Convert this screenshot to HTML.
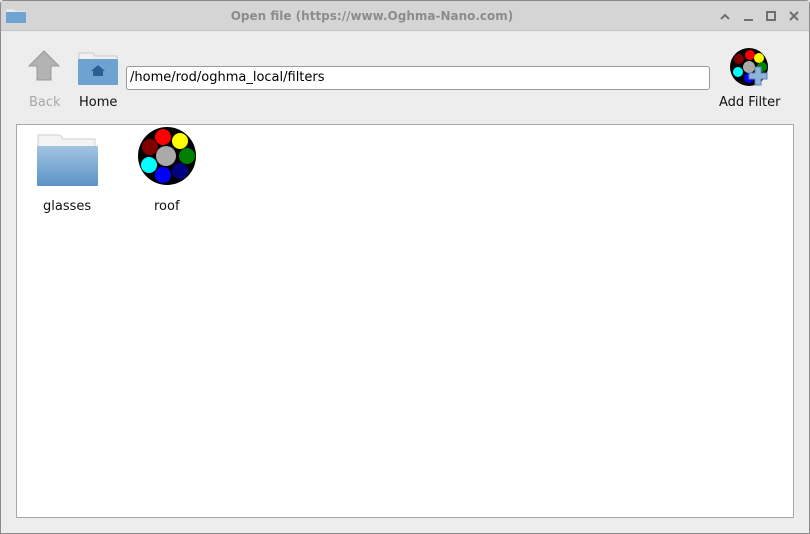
<!DOCTYPE html>
<html><head><style>
body{margin:0;width:810px;height:534px;background:#ededed;font-family:"Liberation Sans","DejaVu Sans",sans-serif;position:relative;overflow:hidden}
.win{position:absolute;left:0;top:0;width:808px;height:532px;border:1px solid #8a8a8a;border-radius:4px 4px 0 0;background:#ededed}
.in{position:absolute;left:-1px;top:-1px;width:810px;height:534px}
.title{position:absolute;left:1px;top:1px;width:808px;height:29px;background:#d5d5d5;border-bottom:1px solid #c4c4c4}
.title .t{position:absolute;left:0;width:742px;top:8px;text-align:center;font-size:12px;font-weight:bold;color:#8c8c8c;font-family:"DejaVu Sans",sans-serif}
.lbl{position:absolute;font-size:13px;font-family:"DejaVu Sans",sans-serif;color:#111}
.addr{position:absolute;left:126px;top:66px;width:584px;height:24px;background:#fff;border:1px solid #9a9a9a;border-radius:3px;box-sizing:border-box;font-size:13px;font-family:"DejaVu Sans",sans-serif;padding:3px 3px;color:#000}
.panel{position:absolute;left:16px;top:124px;width:778px;height:394px;background:#fff;border:1px solid #a8a8a8;box-sizing:border-box}
</style></head><body>
<div class="win"><div class="in">
<div class="title"><div class="t">Open file (https://www.Oghma-Nano.com)</div>
<svg style="position:absolute;left:4px;top:6px" width="22" height="17"><path d="M1 2h7l2 2h11v12H1z" fill="#e8e8e8"/><rect x="1" y="5" width="20" height="11" fill="#6fa4d2"/></svg>
<svg style="position:absolute;left:714px;top:7px" width="90" height="16" stroke="#707070" stroke-width="2" fill="none"><path d="M6 11l4-4 4 4"/><path d="M29 12h9"/><rect x="52" y="4" width="8" height="8"/><path d="M75 4l8 8M83 4l-8 8"/></svg>
</div>
<svg style="position:absolute;left:27px;top:50px" width="34" height="32"><path d="M17 1L2 16h8v14h14V16h8z" fill="#b3b3b3" stroke="#9a9a9a"/></svg>
<div class="lbl" style="left:29px;top:95px;color:#a8a8a8">Back</div>
<svg style="position:absolute;left:77px;top:51px" width="42" height="36"><path d="M2 2h14l2 3h22v6H2z" fill="#f0f0f0" stroke="#ccc"/><rect x="1" y="8" width="40" height="26" fill="#6ea2d1" rx="1"/><path d="M21 14l-7 6h2v5h10v-5h2z" fill="#2a5f94"/></svg>
<div class="lbl" style="left:79px;top:95px">Home</div>
<div class="addr">/home/rod/oghma_local/filters</div>
<svg style="position:absolute;left:729px;top:47px" width="42" height="42"><circle cx="20" cy="20" r="19" fill="#000"/><circle cx="21" cy="8" r="5" fill="red"/><circle cx="30" cy="11" r="5" fill="#ff0"/><circle cx="33" cy="20" r="5" fill="green"/><circle cx="10" cy="12" r="5" fill="#800000"/><circle cx="9" cy="25" r="5" fill="cyan"/><circle cx="20" cy="31" r="5" fill="blue"/><circle cx="20" cy="20" r="6" fill="#aaa"/><path d="M26 20h6v6h6v6h-6v6h-6v-6h-6v-6h6z" fill="#8fb3d9" stroke="#5a85b5"/></svg>
<div class="lbl" style="left:719px;top:95px">Add Filter</div>
<div class="panel">
<svg style="position:absolute;left:19px;top:9px" width="64" height="54"><defs><linearGradient id="g" x1="0" y1="0" x2="0" y2="1"><stop offset="0" stop-color="#a2c4e2"/><stop offset="1" stop-color="#5b93c5"/></linearGradient></defs><path d="M2 1h22l3 4h32v10H2z" fill="#f3f3f3" stroke="#cfcfcf"/><rect x="1" y="12" width="61" height="40" rx="1" fill="url(#g)"/></svg>
<div class="lbl" style="left:26px;top:74px">glasses</div>
<svg style="position:absolute;left:120px;top:1px" width="60" height="60"><circle cx="30" cy="30" r="29" fill="#000"/><circle cx="26" cy="11" r="8" fill="red"/><circle cx="43" cy="15" r="8" fill="#ff0"/><circle cx="50" cy="30" r="8" fill="green"/><circle cx="43" cy="45" r="8" fill="navy"/><circle cx="26" cy="49" r="8" fill="blue"/><circle cx="12" cy="39" r="8" fill="cyan"/><circle cx="13" cy="21" r="8" fill="#800000"/><circle cx="29" cy="30" r="10" fill="#aaa"/></svg>
<div class="lbl" style="left:137px;top:74px">roof</div>
</div>
</div></div>
</body></html>
